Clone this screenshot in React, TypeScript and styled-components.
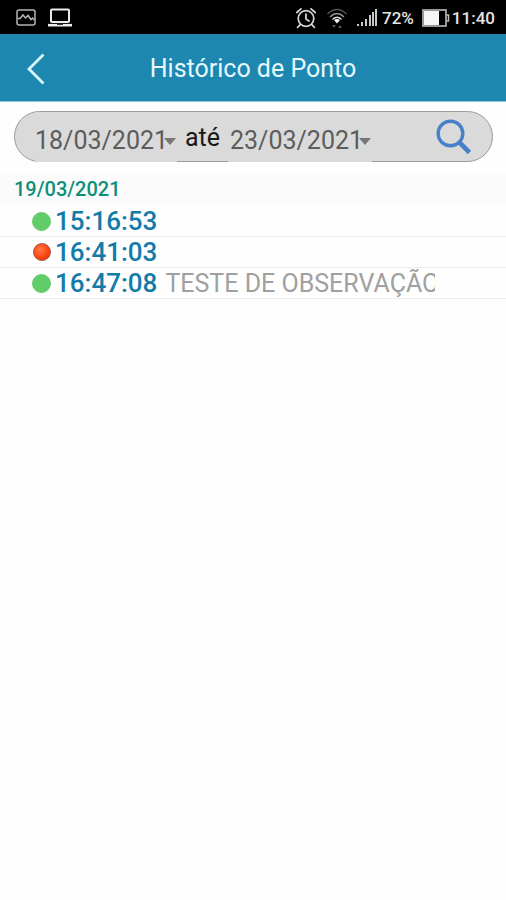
import React from "react";
import styled, { createGlobalStyle } from "styled-components";

const GlobalStyle = createGlobalStyle`
  *, *::before, *::after { box-sizing: border-box; }
  body {
    margin: 0;
    background: #fefefe;
    font-family: Roboto, "Liberation Sans", sans-serif;
  }
`;

const Screen = styled.div`
  display: flex;
  flex-direction: column;
  min-height: 100vh;
`;

const StatusBar = styled.div`
  display: flex;
  align-items: center;
  justify-content: space-between;
  height: 34px;
  padding: 1px 11px 0 16px;
  background: #000;
  color: #e4e4e4;
  font-size: 17px;
  font-weight: 500;
  line-height: 20px;
`;

const StatusGroup = styled.div<{ $gap: number }>`
  display: flex;
  align-items: center;
  gap: ${(p) => p.$gap}px;

  svg { display: block; flex: none; }
`;

const AppBar = styled.header`
  display: grid;
  grid-template-columns: 72px 1fr 72px;
  align-items: center;
  height: 68px;
  padding-top: 2px;
  background: #1e87b0;
  border-bottom: 1px solid #8fc3d8;
`;

const BackButton = styled.button`
  display: flex;
  align-items: center;
  justify-content: center;
  height: 48px;
  padding: 0;
  border: 0;
  background: none;
  cursor: pointer;
`;

const Title = styled.h1`
  margin: 0;
  color: #e6f8fd;
  font-size: 25px;
  font-weight: 400;
  line-height: 32px;
  text-align: center;
`;

const FilterBar = styled.form`
  display: flex;
  height: 51px;
  margin: 9px 13px 0 14px;
  padding-left: 20px;
  border: 1px solid #9c9c9c;
  border-radius: 26px;
  background: #dadada;
`;

const DateField = styled.div<{ $width: number; $inset: number }>`
  position: relative;
  width: ${(p) => p.$width}px;
  margin-bottom: -1px;
  padding-left: ${(p) => p.$inset}px;
  background: #dadada;

  svg {
    position: absolute;
    right: 1px;
    top: 26px;
    pointer-events: none;
  }
`;

const DateSelect = styled.select`
  appearance: none;
  width: 100%;
  height: 100%;
  padding: 6px 0 0;
  border: 0;
  background: none;
  color: #5c5c5c;
  font-family: inherit;
  font-size: 25px;
`;

const Until = styled.span`
  width: 51px;
  padding-top: 10px;
  color: #181818;
  font-size: 25px;
  line-height: 32px;
  text-align: center;
`;

const SearchButton = styled.button`
  display: flex;
  align-items: center;
  margin-left: auto;
  padding: 0 20px;
  border: 0;
  background: none;
  cursor: pointer;
`;

const DayHeading = styled.h2`
  margin: 12px 0 0;
  padding: 0 14px;
  background: #fbfbfb;
  color: #0b8f78;
  font-size: 20px;
  font-weight: 500;
  line-height: 30px;
`;

const EntryList = styled.ul`
  margin: 0;
  padding: 2px 0 0;
  list-style: none;
`;

const Entry = styled.li`
  display: flex;
  align-items: center;
  height: 31px;
  padding: 0 71px 0 32px;
  border-bottom: 1px solid #ececec;
`;

const DotSlot = styled.span`
  display: flex;
  flex: none;
  justify-content: center;
  width: 19px;
  margin-right: 4px;
`;

const Dot = styled.span<{ $kind: "in" | "out" }>`
  width: ${(p) => (p.$kind === "in" ? 19 : 18)}px;
  height: ${(p) => (p.$kind === "in" ? 19 : 18)}px;
  border-radius: 50%;
  border: 1px solid ${(p) => (p.$kind === "in" ? "#62cc68" : "#a8543c")};
  background: ${(p) =>
    p.$kind === "in"
      ? "#62cc68"
      : "radial-gradient(circle at 38% 35%, #ff7a48 0%, #fb4a16 50%, #d92c04 100%)"};
`;

const Time = styled.time`
  flex: none;
  color: #127ba8;
  font-size: 26px;
  font-weight: 500;
  line-height: 30px;
`;

const Note = styled.span`
  min-width: 0;
  margin-left: 8px;
  padding-top: 2px;
  overflow: hidden;
  color: #a0a0a0;
  font-size: 25px;
  line-height: 30px;
  white-space: nowrap;
`;

const PictureIcon = () => (
  <svg width="20" height="17" viewBox="0 0 20 17" fill="none" stroke="#b4b4b4" strokeWidth="1.5">
    <rect x="1" y="1" width="18" height="15" rx="2" />
    <path d="M1.5 9.5 L4 9.5 L7 6 L9.5 9 L12 6.5 L15 10.5 L16.5 9 L18.5 11" />
  </svg>
);

const LaptopIcon = () => (
  <svg width="26" height="19" viewBox="0 0 26 19" fill="none" stroke="#ececec">
    <rect x="4" y="1.5" width="18" height="12.5" rx="1" strokeWidth="2" />
    <path d="M1 17.2 H25" strokeWidth="2.6" />
    <path d="M10 16.5 H16" stroke="#333" strokeWidth="1" />
  </svg>
);

const AlarmIcon = () => (
  <svg width="22" height="22" viewBox="0 0 22 22" fill="none" stroke="#d8d8d8" strokeWidth="1.7" strokeLinecap="round">
    <circle cx="11" cy="11.5" r="7.8" />
    <path d="M11 7 V12 L14 14 M1.8 5.5 L6 1.8 M20.2 5.5 L16 1.8 M5.2 17.6 L2.5 20.5 M16.8 17.6 L19.5 20.5" />
  </svg>
);

const WifiIcon = () => (
  <svg width="20" height="22" viewBox="0 0 20 22" fill="none" strokeLinecap="round">
    <path d="M1 6.5 Q10 -1.5 19 6.5" stroke="#555" strokeWidth="1.5" />
    <path d="M3.5 9.5 Q10 3.5 16.5 9.5" stroke="#999" strokeWidth="1.6" />
    <path d="M6 12 Q10 8.5 14 12" stroke="#ddd" strokeWidth="1.6" />
    <path d="M7 13 Q10 11 13 13 L10 16.5 Z" fill="#f4f4f4" />
    <path d="M5 18 H9 L7 21 Z M11 21 H15 L13 18 Z" fill="#555" />
  </svg>
);

const SignalIcon = () => (
  <svg width="21" height="19" viewBox="0 0 21 19" fill="#c8c8c8">
    <path d="M0 16h2v2H0z M4 14h2v4H4z M8 11h2v7H8z M12 7h2v11h-2z M15 4h2v14h-2z M18 1h2v17h-2z" />
  </svg>
);

const BatteryIcon = () => (
  <svg width="28" height="18" viewBox="0 0 28 18">
    <rect x="1" y="1" width="23" height="16" fill="none" stroke="#bdbdbd" strokeWidth="1.6" />
    <rect x="2" y="2" width="15" height="14" fill="#f6f6f6" />
    <path d="M24.5 6 h2 v6 h-2" fill="none" stroke="#bdbdbd" strokeWidth="1.5" />
  </svg>
);

const BackIcon = () => (
  <svg width="18" height="32" viewBox="0 0 18 32" fill="none" stroke="#d9f6fd" strokeWidth="2.8">
    <path d="M16.5 1.5 L2 16 L16.5 30.5" />
  </svg>
);

const CaretIcon = () => (
  <svg width="12" height="7" viewBox="0 0 12 7" fill="#777">
    <path d="M0 0 H12 L6 7 Z" />
  </svg>
);

const SearchIcon = () => (
  <svg width="36" height="36" viewBox="0 0 36 36" fill="none" stroke="#4780c8">
    <circle cx="14.5" cy="14.5" r="12.3" strokeWidth="3.4" />
    <path d="M23 23 L33.5 33.5" strokeWidth="4.6" />
  </svg>
);

interface DatePickerProps {
  label: string;
  value: string;
  width: number;
  inset?: number;
}

const DatePicker = ({ label, value, width, inset = 0 }: DatePickerProps) => (
  <DateField $width={width} $inset={inset}>
    <DateSelect aria-label={label} defaultValue={value}>
      <option value={value}>{value}</option>
    </DateSelect>
    <CaretIcon />
  </DateField>
);

const entries: { time: string; kind: "in" | "out"; note?: string }[] = [
  { time: "15:16:53", kind: "in" },
  { time: "16:41:03", kind: "out" },
  { time: "16:47:08", kind: "in", note: "TESTE DE OBSERVAÇÃO" },
];

export default function App() {
  return (
    <Screen>
      <GlobalStyle />
      <StatusBar>
        <StatusGroup $gap={11}>
          <PictureIcon />
          <LaptopIcon />
        </StatusGroup>
        <StatusGroup $gap={8}>
          <StatusGroup $gap={4}>
            <StatusGroup $gap={10}>
              <AlarmIcon />
              <WifiIcon />
              <SignalIcon />
            </StatusGroup>
            <span>72%</span>
          </StatusGroup>
          <StatusGroup $gap={2}>
            <BatteryIcon />
            <span>11:40</span>
          </StatusGroup>
        </StatusGroup>
      </StatusBar>
      <AppBar>
        <BackButton type="button" aria-label="Voltar">
          <BackIcon />
        </BackButton>
        <Title>Histórico de Ponto</Title>
      </AppBar>
      <main>
        <FilterBar onSubmit={(e: React.FormEvent) => e.preventDefault()}>
          <DatePicker label="Data inicial" value="18/03/2021" width={142} />
          <Until>até</Until>
          <DatePicker label="Data final" value="23/03/2021" width={144} inset={2} />
          <SearchButton type="submit" aria-label="Pesquisar">
            <SearchIcon />
          </SearchButton>
        </FilterBar>
        <DayHeading>19/03/2021</DayHeading>
        <EntryList>
          {entries.map((entry) => (
            <Entry key={entry.time}>
              <DotSlot>
                <Dot $kind={entry.kind} />
              </DotSlot>
              <Time>{entry.time}</Time>
              {entry.note && <Note>{entry.note}</Note>}
            </Entry>
          ))}
        </EntryList>
      </main>
    </Screen>
  );
}
